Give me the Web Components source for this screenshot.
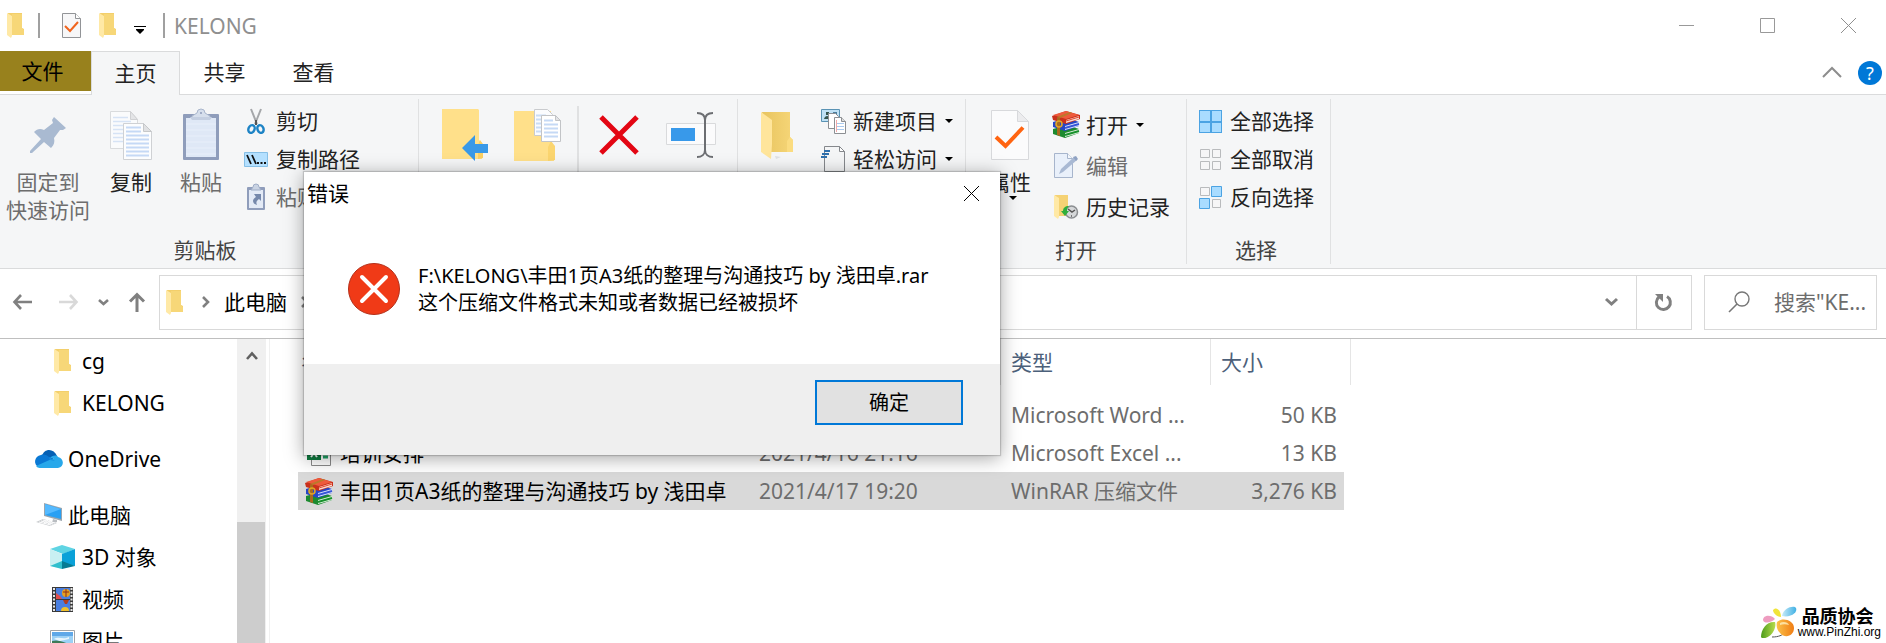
<!DOCTYPE html>
<html lang="zh-CN">
<head>
<meta charset="utf-8">
<title>KELONG</title>
<style>
  html, body { height: 100%; }
  body {
    margin: 0;
    overflow: hidden;
    background: #fff;
    color: #000;
    font: 21px/28px "Noto Sans", "Noto Sans CJK SC", sans-serif;
  }
</style>
</head>
<body>
<explorer-window></explorer-window>

<script>
const ICONS = {
  folder: ['0 0 17 25', `
    <path d="M1 0h14v15l2 1v6H4z" fill="#f3cf6b"/>
    <path d="M5 1h10v14l2 2v5H5z" fill="#f7d778"/>
    <path d="M0 0l5 3v20l-1 2-4-3z" fill="#ffe9a6"/>`],
  folderBig: ['0 0 33 49', `
    <defs><linearGradient id="g"><stop offset="0" stop-color="#e8c45f"/><stop offset="1" stop-color="#f6d678"/></linearGradient></defs>
    <path d="M14 45l6 1-5 2z" fill="#dfe1e4"/>
    <path d="M1 1h28v25l3 3v12H10z" fill="url(#g)"/>
    <path d="M26 41V30l3-4 3 3v12z" fill="#fbdc80"/>
    <path d="M0 1l11 8v24l-1 15-10-7z" fill="#ffe59b"/>`],
  checkDoc: ['0 0 38 50', `
    <path d="M.5.5h26l11 11v38H.5z" fill="#fbfbfc" stroke="#d8d9dc"/>
    <path d="M26.5.5v11h11z" fill="#ececee" stroke="#d8d9dc"/>
    <path d="M5 27l9.500 9L32 17.500" fill="none" stroke="#ff6411" stroke-width="4"/>`],
  checkSmall: ['0 0 19 25', `
    <path d="M.5.5h13l5 5v19H.5z" fill="#f7f7f8" stroke="#929497"/>
    <path d="M13.5.5v5h5" fill="#fff" stroke="#929497"/>
    <path d="M3 13l5 5 8-9" fill="none" stroke="#f0641e" stroke-width="2"/>`],
  customize: ['0 0 12 8', `<path d="M0 0h12v1H0zM2 3h8v1L6 8 2 4z"/>`],
  caret: ['0 0 8 4', `<path d="M0 0h8L4 4z"/>`],
  pin: ['0 0 36 36', `
    <path d="M24 0l12 11-3 2-3 0-6 8c1 4 0 7-3 10l-7-6L2 36l-2 0 0-2 11-12-7-7c3-3 6-4 10-2l9-7-1-3z" fill="#a9bad1"/>`],
  copy: ['0 0 42 49', `
    <path d="M.5.5h20l7 8v29H.5z" fill="#fafbfc" stroke="#d9dbdd"/>
    <path d="M20.5.5v8h7z" fill="#e4e5e7" stroke="#d0d1d3"/>
    <path d="M3 6.5h15M3 10.5h18M3 14.5h18M3 18.5h10M3 22.5h10M3 26.5h10M3 30.5h10" stroke="#d6e3f5" stroke-width="1.5"/>
    <path d="M13.5 12.5h20l8 8v28h-28z" fill="#fcfdfe" stroke="#cfd1d4"/>
    <path d="M33.5 12.5v8h8z" fill="#e0e1e3" stroke="#c6c8ca"/>
    <path d="M16 16.5h15M16 20.5h15M16 24.5h23M16 28.5h23M16 32.5h23M16 36.5h23M16 40.5h23M16 44.5h23" stroke="#c5d9f5" stroke-width="2"/>`],
  paste: ['0 0 36 50', `
    <rect y="4" width="36" height="46" rx="1" fill="#8f9dbb"/>
    <path d="M3 8h30v39H3z" fill="#dfe8f6"/>
    <path d="M3 14h30M3 20h30M3 26h30M3 32h30M3 38h30M3 44h30" stroke="#e8effa"/>
    <path d="M9 9V6l5-3a4 4 0 0 1 8 0l5 3v3z" fill="#d6dfec" stroke="#a9b6cc"/>
    <path d="M7 7h22l-2 3H9z" fill="#c4cfe1"/><circle cx="18" cy="3" r="1" fill="#8f9dbb"/>`],
  cut: ['0 0 18 25', `
    <path d="M4 0l6 15M14 0L8 15" stroke="#a5a7aa" stroke-width="2" fill="none"/>
    <path d="M9 11v5" stroke="#555" stroke-width="2"/>
    <ellipse cx="4.5" cy="20" rx="3" ry="4" transform="rotate(24 4.5 20)" fill="none" stroke="#1d83c5" stroke-width="2.4"/>
    <ellipse cx="13.5" cy="20" rx="3" ry="4" transform="rotate(-24 13.5 20)" fill="none" stroke="#1d83c5" stroke-width="2.4"/>`],
  path: ['0 0 24 15', `
    <path d="M.5.5h23v14H.5z" fill="#b4e0ff" stroke="#86bfe6"/>
    <path d="M3 3l4 9M8 3l4 9" stroke="#111" stroke-width="1.8"/>
    <path d="M13 10h2v2h-2zM16.5 10h2v2h-2zM20 10h2v2h-2z" fill="#111"/>`],
  shortcut: ['0 0 18 25', `
    <rect y="2" width="18" height="23" rx="1" fill="#8f9dbb"/>
    <path d="M2 5h14v18H2z" fill="#e3eaf6"/>
    <path d="M4 5l2-3a3 3 0 0 1 6 0l2 3z" fill="#c9d3e3" stroke="#9fadc6"/>
    <path d="M7 9h7v7l-2-2c-3 2-3 4-2 6-4-1-6-5-1-8z" fill="#7588ab"/>`],
  moveTo: ['0 0 47 52', `
    <path d="M0 0h36l1 1v30l3 3v16H0z" fill="#ffe08a"/>
    <path d="M36 50V36l2-5 3 4v14z" fill="#fbd063"/>
    <path d="M20 39l13-13v9h13v9H33v8z" fill="#3999e8"/>`],
  copyTo: ['0 0 47 52', `
    <path d="M0 2h37v32l3 3v15H0z" fill="#ffe08a"/>
    <path d="M34 52V38l3-6 4 5v14z" fill="#fbd56f"/>
    <path d="M20.5.5h13l5 5v21h-18z" fill="#fbfcfe" stroke="#c9cbce"/>
    <path d="M22 6.5h10M22 10.5h5M22 14.5h5M22 18.5h5M22 22.5h5" stroke="#c9dcf5" stroke-width="2"/>
    <path d="M27.5 6.5h14l5 5v21h-19z" fill="#fff" stroke="#c2c4c7"/>
    <path d="M41.5 6.5v5h5z" fill="#e3e4e6" stroke="#c2c4c7"/>
    <path d="M30 11.5h9M30 15.5h14M30 19.5h14M30 23.5h14M30 27.5h14" stroke="#c5d9f5" stroke-width="2"/>`],
  remove: ['0 0 40 40', `<path d="M2 2l36 36M38 2L2 38" stroke="#e30613" stroke-width="5"/>`],
  rename: ['0 0 50 46', `
    <path d="M.5 11.5h49v21H.5z" fill="#fbfbfc" stroke="#d9dadc"/>
    <path d="M5 16h24v13H5z" fill="#3899ea"/>
    <path d="M31 1c5 0 8 2 8 7v30c0 4-3 7-8 7M47 1c-5 0-8 2-8 7v30c0 4 3 7 8 7" fill="none" stroke="#6c6e72" stroke-width="2"/>`],
  newItem: ['0 0 25 25', `
    <path d="M.5.5h18v12H.5z" fill="#bfe1f5" stroke="#5a93b4"/>
    <path d="M3 10c1-4 5-4 7 0zM5 3h3v3H5z" fill="#35554f"/><path d="M12 4h4" stroke="#4c7f9e" stroke-width="2"/>
    <path d="M7.5 4.5h7l3 3v12h-10z" fill="#fff" stroke="#8c8f93"/>
    <path d="M13.5 8.5h7l4 4v12h-11z" fill="#fff" stroke="#8c8f93"/>
    <path d="M20.5 8.5v4h4" fill="#ddd" stroke="#8c8f93"/>
    <path d="M16 14.5h7M16 17.5h7M16 20.5h7" stroke="#a9c9ee"/><path d="M15.5 11v12" stroke="#f0a9a9"/>`],
  easyAccess: ['0 0 24 26', `
    <path d="M3.5.5h15l5 5v20h-20z" fill="#f4f5f6" stroke="#85888c"/>
    <path d="M18.5.5v5h5z" fill="#fff" stroke="#85888c"/>
    <path d="M3 5h6M1 8h7M0 11h6" stroke="#2f70ad" stroke-width="2"/>`],
  winrar: ['0 0 28 27', `
    <path d="M1 18l14-4 12 4v4l-14 5-12-4z" fill="#1c8a2f"/>
    <path d="M13 22l14-4v4l-14 4z" fill="#dff2df"/><path d="M13 24l14-4" stroke="#17912c" stroke-width="2"/>
    <path d="M1 11l14-4 12 4v4l-14 5-12-4z" fill="#2546c6"/>
    <path d="M13 15l14-4v4l-14 4z" fill="#e3e8fb"/><path d="M13 17l14-4" stroke="#3656d8" stroke-width="2"/>
    <path d="M0 5l14-5 14 4v4l-14 5L1 9z" fill="#c9301c"/>
    <path d="M1 4l13-4 13 4-13 4z" fill="#ee5a3c"/>
    <path d="M14 9l13-4v3l-13 4z" fill="#f8d8d0"/><path d="M14 10l13-4" stroke="#e24a2c"/>
    <path d="M5 6l3 1v18l-3-1z" fill="#a8691f"/>
    <path d="M5 6L18 1l2 1L8 7z" fill="#b97a2b"/>
    <circle cx="7" cy="13" r="3" fill="none" stroke="#e2a524" stroke-width="1.6"/>`],
  edit: ['0 0 24 25', `
    <path d="M.5.5h13l5 5v19H.5z" fill="#e9f0fa" stroke="#a7b5cc"/>
    <path d="M13.5.5v5h5" fill="#f4f7fb" stroke="#a7b5cc"/>
    <path d="M5 21l2-5L20 4l3 3L9 19z" fill="#a9b9d3"/><path d="M19 4l3-1 2 3-2 2z" fill="#8fa2c2"/>`],
  history: ['0 0 24 24', `
    <path d="M1 0h13v12l2 2v7H4z" fill="#f5d274"/>
    <path d="M0 0l5 3v19l-1 2-4-3z" fill="#ffe9a6"/>
    <circle cx="17.5" cy="17" r="6" fill="#d5d7d9" stroke="#8b8e91" stroke-width="1.5"/>
    <path d="M14 14l4 3 3-2M17 21h1" fill="none" stroke="#555" stroke-width="1.5"/>
    <path d="M15 11c-4 0-6 2-6 5H7l4 5 4-5h-2c0-2 0-3 2-5z" fill="#2fae3c"/>`],
  selectAll: ['0 0 23 23', `
    <path d="M0 0h23v23H0z" fill="#4ba3e3"/>
    <path d="M1 1h10v10H1zM13 1h9v10h-9zM1 13h10v9H1zM13 13h9v9h-9z" fill="#a9dcff"/>`],
  selectNone: ['0 0 23 23', `
    <path d="M1.5 1.5h9v8h-9zM13.5 1.5h8v8h-8zM1.5 13.5h9v8h-9zM13.5 13.5h8v8h-8z" fill="#f6f6f7" stroke="#b9bbbd"/>`],
  selectInvert: ['0 0 23 23', `
    <path d="M1.5 1.5h9v8h-9zM13.5 13.5h8v8h-8z" fill="#f6f6f7" stroke="#b9bbbd"/>
    <path d="M12.5.5h10v10h-10zM.5 12.5h10v10H.5z" fill="#a9dcff" stroke="#4ba3e3"/>`],
  minimize: ['0 0 15 15', `<path d="M0 7.5h15" stroke="#999"/>`],
  maximize: ['0 0 15 15', `<path d="M.5.5h14v14H.5z" fill="none" stroke="#999"/>`],
  close: ['0 0 15 15', `<path d="M0 0l15 15M15 0L0 15" stroke="currentColor" fill="none"/>`],
  collapse: ['0 0 20 11', `<path d="M1 10l9-9 9 9" fill="none" stroke="#8d8d8d" stroke-width="2"/>`],
  back: ['0 0 19 16', `<path d="M19 8H2M8 1L1.500 8 8 15" fill="none" stroke="currentColor" stroke-width="2.6"/>`],
  forward: ['0 0 19 16', `<path d="M0 8h17M11 1l6.5 7-6.5 7" fill="none" stroke="currentColor" stroke-width="2.6"/>`],
  up: ['0 0 16 19', `<path d="M8 19V2M1 8.5L8 1.5l7 7" fill="none" stroke="currentColor" stroke-width="3"/>`],
  chevron: ['0 0 13 8', `<path d="M1 1l5.5 5L12 1" fill="none" stroke="currentColor" stroke-width="3"/>`],
  chevronSmall: ['0 0 9 6', `<path d="M0 1l4.5 4L9 1" fill="none" stroke="currentColor" stroke-width="2.6"/>`],
  crumb: ['0 0 8 12', `<path d="M1 1l5 5-5 5" fill="none" stroke="#808080" stroke-width="2.6"/>`],
  refresh: ['0 0 18 18', `
    <path d="M12 3.5A7 7 0 1 1 4 4" fill="none" stroke="#808080" stroke-width="3"/>
    <path d="M0 1h8v8z" fill="#808080"/>`],
  search: ['0 0 22 22', `
    <circle cx="14" cy="8" r="7" fill="none" stroke="#777" stroke-width="1.4"/>
    <path d="M9 13l-8 8" stroke="#777" stroke-width="1.6"/>`],
  scrollUp: ['0 0 12 10', `<path d="M1 8l5-5.5L11 8" fill="none" stroke="#606060" stroke-width="2.6"/>`],
  onedrive: ['0 0 28 18', `
    <path d="M7 6c2-8 12-8 15 0l-9 6z" fill="#0560b4"/>
    <path d="M4 17C-2 15-1 6 6 5c3-1 6 0 8 2l9 5-18 6z" fill="#0a78d4"/>
    <path d="M15 8c3-3 7-3 8-1 6 1 7 10 0 11H5c-2 0-3-1-4-2l18-8z" fill="#28a8ea"/>
    <path d="M14 7l6 4-5-1z" fill="#1490df"/>`],
  computer: ['0 0 27 24', `
    <path d="M8 0l18 5v13L8 13z" fill="#9aa5ae"/>
    <path d="M9 1l16 5v10L9 12z" fill="#29a0f3"/><path d="M9 1l16 5L9 12z" fill="#55baff"/>
    <path d="M17 16l4 1v2l-5 1z" fill="#b9bdc1"/>
    <path d="M0 19l7-3 14 4-7 3z" fill="#c9cccf"/>
    <path d="M3 19l12 3M5 18l12 3M7 17l12 3M8 20l4-3M12 21l4-3" stroke="#fff"/>`],
  cube: ['0 0 25 24', `
    <path d="M0 4l12-4 13 4-12 5z" fill="#5fd4e3"/>
    <path d="M0 4l12 5v10L0 21z" fill="#c9f0f2"/>
    <path d="M25 4L12 9v10l13 2z" fill="#0aa1d8"/>
    <path d="M0 21l12-5v8z" fill="#32bfcd"/><path d="M25 21l-13-5v8z" fill="#067b93"/>`],
  video: ['0 0 21 25', `
    <path d="M0 0h21v25H0z" fill="#3a3a3a"/>
    <path d="M2 1v24M19.5 1v24" stroke="#e6e6e6" stroke-width="2" stroke-dasharray="2 1.5"/>
    <path d="M4 1h14v11H4zM4 13h14v11H4z" fill="#4a7fe0"/>
    <path d="M4 6l4 3 2 3H4z" fill="#e04e4e"/>
    <circle cx="14" cy="6" r="4" fill="#e8a01e"/><path d="M14 2v8M11 5h6" stroke="#8e2f1a"/>
    <path d="M11 13h6l-2 4h-2z" fill="#b33d1f"/><path d="M9 24a4 4 0 0 1 8 0z" fill="#f0c02b"/>`],
  picture: ['0 0 25 22', `
    <path d="M.5.5h24v21H.5z" fill="#fff" stroke="#a0a3a6"/>
    <path d="M2 2h21v18H2z" fill="#9bd0f5"/><path d="M2 2h21v4H2z" fill="#5fa8e8"/>
    <path d="M2 11c7-2 12 2 21 4v5H2z" fill="#3e7a58"/><path d="M4 9c5-3 9 1 15-2v2l-9 2z" fill="#e9f5fc"/>`],
  excel: ['0 0 24 26', `
    <path d="M4.5.5h14l5 5v20h-19z" fill="#fff" stroke="#8a8a8a"/>
    <path d="M0 6h14v14H0z" fill="#107c41"/>
    <path d="M4 9l6 8M10 9l-6 8" stroke="#fff" stroke-width="2"/>
    <path d="M16 9h5M16 13h5M16 17h5" stroke="#21a366" stroke-width="3"/>`],
  word: ['0 0 24 26', `
    <path d="M4.5.5h14l5 5v20h-19z" fill="#fff" stroke="#8a8a8a"/>
    <path d="M0 6h14v14H0z" fill="#185abd"/>
    <path d="M3 9l2 8 2-6 2 6 2-8" fill="none" stroke="#fff" stroke-width="2"/>`],
  error: ['0 0 52 52', `
    <circle cx="26" cy="26" r="25.5" fill="#f03a17" stroke="#b5301a"/>
    <path d="M14 14l24 24M38 14L14 38" stroke="#fff" stroke-width="4" stroke-linecap="round"/>`],
  petals: ['0 0 36 33', `
    <defs>
      <linearGradient id="o"><stop offset="0" stop-color="#fbc24a"/><stop offset="1" stop-color="#f07d14"/></linearGradient>
      <linearGradient id="gr" x1="1" x2="0"><stop offset="0" stop-color="#b8dc4c"/><stop offset="1" stop-color="#4d9c1c"/></linearGradient>
      <linearGradient id="b" x1="0" x2="1"><stop offset="0" stop-color="#c9ebf8"/><stop offset="1" stop-color="#3fb0e4"/></linearGradient>
    </defs>
    <path d="M11 31c7 0 10-2 13-4" stroke="#555" fill="none"/>
    <path d="M0 31C0 23 6 15 14 16c2 6-4 16-11 16-1 0-3 0-3-1z" fill="url(#gr)"/>
    <path d="M2 14c0-5 8-6 12-1-4 4-11 5-12 1z" fill="#ee9cc0"/>
    <path d="M12 4c3-4 8 0 8 7-4 0-8-4-8-7z" fill="#f0e43a"/>
    <path d="M21 10c1-8 12-11 14-8 2 4-5 10-14 8z" fill="url(#b)"/>
    <path d="M16 16c5-5 17-2 17 6s-9 11-14 5c-3-3-4-7-3-11z" fill="url(#o)"/>
    <path d="M19 17c3-2 8-1 9 2-3-1-6-1-9 0z" fill="#fde0a0"/>`]
};

class UiIcon extends HTMLElement {
  constructor() {
    super();
    this.attachShadow({ mode: 'open' });
  }

  connectedCallback() {
    const [box, body] = ICONS[this.getAttribute('name')];
    const [, , w, h] = box.split(' ');
    this.shadowRoot.innerHTML = `
      <style>
        :host { display: inline-block; flex: none; width: ${w}px; height: ${h}px; }
        svg { display: block; overflow: visible; }
      </style>
      <svg width="${w}" height="${h}" viewBox="${box}" aria-hidden="true">${body}</svg>
    `;
  }
}

// Shared by every component that holds buttons.
const BUTTON_RESET = `
  button {
    display: flex;
    align-items: center;
    justify-content: center;
    margin: 0;
    padding: 0;
    border: 0;
    background: none;
    font: inherit;
    color: inherit;
  }
`;

class TitleBar extends HTMLElement {
  constructor() {
    super();
    this.attachShadow({ mode: 'open' }).innerHTML = `
      <style>
        ${BUTTON_RESET}
        :host { display: flex; align-items: center; height: 51px; padding-left: 7px; color: #8f8f8f; }
        .bar { width: 2px; height: 25px; background: #a0a0a0; }
        .quick { display: flex; align-items: center; gap: 18px; padding: 0 17px 0 22px; }
        .quick button:last-child { color: #000; height: 16px; align-items: flex-end; }
        .home { margin-right: 14px; }
        .title { flex: 1; margin: 0 0 0 9px; font-size: 21px; font-weight: 400; }
        .controls { display: flex; gap: 6px; }
        .controls button { width: 75px; height: 51px; }
      </style>
      <ui-icon class="home" name="folder"></ui-icon>
      <span class="bar"></span>
      <div class="quick">
        <button aria-label="属性"><ui-icon name="checkSmall"></ui-icon></button>
        <button aria-label="新建文件夹"><ui-icon name="folder"></ui-icon></button>
        <button aria-label="自定义"><ui-icon name="customize"></ui-icon></button>
      </div>
      <span class="bar"></span>
      <h1 class="title"><slot></slot></h1>
      <div class="controls">
        <button aria-label="最小化"><ui-icon name="minimize"></ui-icon></button>
        <button aria-label="最大化"><ui-icon name="maximize"></ui-icon></button>
        <button aria-label="关闭"><ui-icon name="close"></ui-icon></button>
      </div>
    `;
  }
}

class RibbonTabs extends HTMLElement {
  constructor() {
    super();
    this.attachShadow({ mode: 'open' }).innerHTML = `
      <style>
        ${BUTTON_RESET}
        :host { display: flex; align-items: flex-start; height: 43px; border-bottom: 1px solid #dadbdc; color: #222; }
        button { box-sizing: border-box; height: 43px; width: 89px; padding-bottom: 2px; }
        .file { width: 91px; height: 40px; padding: 0 6px 0 0; background: #98811d; color: #000; }
        .active { height: 44px; border: 1px solid #dadbdc; border-bottom: 0; background: #f5f6f7; }
        .side { display: flex; align-items: center; gap: 16px; height: 43px; margin-left: auto; padding-right: 4px; }
        .side button { width: auto; height: auto; padding: 0; }
        .side .help { width: 24px; height: 24px; border-radius: 50%; background: #0078d7; color: #fff; font-size: 18px; }
      </style>
      <button class="file">文件</button>
      <button class="active">主页</button>
      <button>共享</button>
      <button>查看</button>
      <div class="side">
        <button aria-label="折叠功能区"><ui-icon name="collapse"></ui-icon></button>
        <button class="help">?</button>
      </div>
    `;
  }
}

class RibbonGroup extends HTMLElement {
  constructor() {
    super();
    this.attachShadow({ mode: 'open' }).innerHTML = `
      <style>
        :host {
          display: flex;
          flex-direction: column;
          margin: 4px 0;
          padding-right: 16px;
          border-right: 1px solid #e0e1e2;
        }
        .items { display: flex; flex: 1; }
        .label { height: 28px; margin-right: -8px; color: #444; text-align: center; }
      </style>
      <div class="items"><slot></slot></div>
      <div class="label">${this.getAttribute('label') || ''}</div>
    `;
  }
}

class BigButton extends HTMLElement {
  constructor() {
    super();
    this.attachShadow({ mode: 'open' }).innerHTML = `
      <style>
        ${BUTTON_RESET}
        :host { display: block; min-width: var(--tile, 72px); }
        button { flex-direction: column; justify-content: flex-start; width: 100%; padding: 10px 6px 0; color: #222; }
        .art { display: flex; align-items: center; justify-content: center; height: 52px; margin-bottom: 7px; }
        :host([disabled]) button { color: #6d6d6d; }
        ui-icon[name=caret] { margin-left: 6px; }
      </style>
      <button ${this.hasAttribute('disabled') ? 'disabled' : ''} aria-label="${this.getAttribute('label') || this.textContent}">
        <span class="art"><ui-icon name="${this.getAttribute('icon')}"></ui-icon></span>
        <slot></slot>
        ${this.hasAttribute('menu') ? '<ui-icon name="caret"></ui-icon>' : ''}
      </button>
    `;
  }
}

class SmallButton extends HTMLElement {
  constructor() {
    super();
    this.attachShadow({ mode: 'open' }).innerHTML = `
      <style>
        ${BUTTON_RESET}
        :host { display: block; }
        button { gap: 8px; height: var(--row, 38px); color: #222; white-space: nowrap; }
        .art { display: flex; justify-content: center; width: 24px; }
        :host([disabled]) button { color: #6d6d6d; }
      </style>
      <button ${this.hasAttribute('disabled') ? 'disabled' : ''}>
        <span class="art"><ui-icon name="${this.getAttribute('icon')}"></ui-icon></span>
        <slot></slot>
        ${this.hasAttribute('menu') ? '<ui-icon name="caret"></ui-icon>' : ''}
      </button>
    `;
  }
}

class RibbonBar extends HTMLElement {
  constructor() {
    super();
    this.attachShadow({ mode: 'open' }).innerHTML = `
      <style>
        :host { display: flex; height: 173px; background: #f5f6f7; border-bottom: 1px solid #dadbdc; }
        .clipboard { --tile: 70px; }
        .pin { min-width: 96px; }
        .list { padding: 3px 0 0 8px; }
        .open { --row: 41px; padding-top: 5px; }
        .divider { width: 2px; margin: 7px 4px 0; background: #e0e1e2; }
        .organize { padding: 0 10px; }
        .new { padding: 0 12px 0 3px; }
        .props { padding-left: 8px; }
        .select { padding-left: 3px; }
      </style>
      <ribbon-group class="clipboard" label="剪贴板">
        <big-button class="pin" icon="pin" disabled>固定到<br>快速访问</big-button>
        <big-button icon="copy">复制</big-button>
        <big-button icon="paste" disabled>粘贴</big-button>
        <div class="list">
          <small-button icon="cut">剪切</small-button>
          <small-button icon="path">复制路径</small-button>
          <small-button icon="shortcut" disabled>粘贴快捷方式</small-button>
        </div>
      </ribbon-group>
      <ribbon-group class="organize">
        <big-button icon="moveTo" label="移动到"></big-button>
        <big-button icon="copyTo" label="复制到"></big-button>
        <span class="divider"></span>
        <big-button icon="remove" label="删除"></big-button>
        <big-button icon="rename" label="重命名"></big-button>
      </ribbon-group>
      <ribbon-group class="new">
        <big-button icon="folderBig" label="新建文件夹"></big-button>
        <div class="list">
          <small-button icon="newItem" menu>新建项目</small-button>
          <small-button icon="easyAccess" menu>轻松访问</small-button>
        </div>
      </ribbon-group>
      <ribbon-group class="props" label="打开">
        <big-button icon="checkDoc" menu>属性</big-button>
        <div class="list open">
          <small-button icon="winrar" menu>打开</small-button>
          <small-button icon="edit" disabled>编辑</small-button>
          <small-button icon="history">历史记录</small-button>
        </div>
      </ribbon-group>
      <ribbon-group class="select" label="选择">
        <div class="list">
          <small-button icon="selectAll">全部选择</small-button>
          <small-button icon="selectNone">全部取消</small-button>
          <small-button icon="selectInvert">反向选择</small-button>
        </div>
      </ribbon-group>
    `;
  }
}

class AddressBar extends HTMLElement {
  constructor() {
    super();
    this.attachShadow({ mode: 'open' }).innerHTML = `
      <style>
        ${BUTTON_RESET}
        :host { display: flex; align-items: center; box-sizing: border-box; height: 70px; padding: 0 9px 3px 13px; border-bottom: 1px solid #bfbfbf; color: #808080; }
        .history { display: flex; align-items: center; gap: 21px; margin-right: 14px; }
        .history button:nth-child(1) { margin-right: 6px; }
        .history button:nth-child(2) { color: #d9d9d9; }
        .path, .search { display: flex; align-items: center; box-sizing: border-box; height: 55px; border: 1px solid #d9d9d9; }
        .path { flex: 1; padding-left: 6px; }
        .crumbs { display: flex; align-items: center; gap: 14px; flex: 1; color: #000; }
        .crumbs ui-icon[name=folder] { margin-right: 5px; }
        .drop { width: 50px; height: 53px; }
        .refresh { width: 55px; height: 53px; border-left: 1px solid #d9d9d9; }
        .search { width: 173px; margin-left: 12px; padding: 0 10px 0 23px; gap: 24px; }
        input { flex: 1; min-width: 0; padding: 0; border: 0; outline: 0; font: inherit; background: none; }
        input::placeholder { color: #6d6d6d; opacity: 1; }
      </style>
      <div class="history">
        <button aria-label="返回"><ui-icon name="back"></ui-icon></button>
        <button aria-label="前进" disabled><ui-icon name="forward"></ui-icon></button>
        <button aria-label="最近浏览"><ui-icon name="chevronSmall"></ui-icon></button>
        <button aria-label="上移"><ui-icon name="up"></ui-icon></button>
      </div>
      <div class="path">
        <div class="crumbs">
          <ui-icon name="folder"></ui-icon>
          <ui-icon name="crumb"></ui-icon>
          <button>此电脑</button>
          <ui-icon name="crumb"></ui-icon>
        </div>
        <button class="drop" aria-label="以前的位置"><ui-icon name="chevron"></ui-icon></button>
        <button class="refresh" aria-label="刷新"><ui-icon name="refresh"></ui-icon></button>
      </div>
      <label class="search">
        <ui-icon name="search"></ui-icon>
        <input type="text" placeholder='搜索"KE...' aria-label="搜索">
      </label>
    `;
  }
}

class NavItem extends HTMLElement {
  constructor() {
    super();
    this.attachShadow({ mode: 'open' }).innerHTML = `
      <style>
        :host { display: block; }
        a { display: flex; align-items: center; height: 42px; padding-left: 35px; gap: 5px; color: #000; text-decoration: none; white-space: nowrap; }
        .art { display: flex; justify-content: center; width: 28px; }
        :host([child]) a { padding-left: 48px; gap: 6px; }
        :host([root]) { margin-top: 14px; }
      </style>
      <a href="#"><span class="art"><ui-icon name="${this.getAttribute('icon')}"></ui-icon></span><slot></slot></a>
    `;
  }
}

class NavPane extends HTMLElement {
  constructor() {
    super();
    this.attachShadow({ mode: 'open' }).innerHTML = `
      <style>
        ${BUTTON_RESET}
        :host { display: flex; overflow: hidden; border-right: 1px solid #f0f0f0; padding-right: 3px; }
        nav { width: 237px; padding-top: 1px; }
        .scroll { display: flex; flex-direction: column; width: 29px; background: #f0f0f0; }
        .scroll button { height: 34px; }
        .thumb { flex: 1; margin: 149px 1px 0 0; background: #cdcdcd; }
      </style>
      <nav>
        <nav-item child icon="folder">cg</nav-item>
        <nav-item child icon="folder">KELONG</nav-item>
        <nav-item root icon="onedrive">OneDrive</nav-item>
        <nav-item root icon="computer">此电脑</nav-item>
        <nav-item child icon="cube">3D 对象</nav-item>
        <nav-item child icon="video">视频</nav-item>
        <nav-item child icon="picture">图片</nav-item>
      </nav>
      <div class="scroll">
        <button aria-label="向上滚动"><ui-icon name="scrollUp"></ui-icon></button>
        <div class="thumb"></div>
      </div>
    `;
  }
}

class FileList extends HTMLElement {
  constructor() {
    super();
    this.attachShadow({ mode: 'open' }).innerHTML = `
      <style>
        :host { display: block; overflow: hidden; padding-left: 28px; }
        table { table-layout: fixed; width: 1053px; border-collapse: separate; border-spacing: 0; color: #6d6d6d; }
        th { height: 46px; padding: 0 10px; border-right: 1px solid #e5e5e5; color: #4c607a; font-weight: 400; text-align: left; box-sizing: border-box; }
        th:first-child { padding-left: 3px; }
        tbody::before { content: ""; display: block; height: 11px; }
        td { height: 38px; padding: 0 10px; white-space: nowrap; box-sizing: border-box; }
        td:first-child { padding-left: 7px; color: #000; }
        td:last-of-type { padding-right: 7px; text-align: right; }
        .name { display: flex; align-items: center; gap: 7px; }
        .art { display: flex; justify-content: center; width: 28px; }
        .selected td { background: #d9d9d9; }
      </style>
      <table>
        <colgroup><col style="width:451px"><col style="width:252px"><col style="width:210px"><col style="width:133px"><col></colgroup>
        <thead>
          <tr><th>名称</th><th></th><th>类型</th><th colspan="2">大小</th></tr>
        </thead>
        <tbody>
          <tr>
            <td><div class="name"><span class="art"><ui-icon name="word"></ui-icon></span></div></td>
            <td></td><td>Microsoft Word ...</td><td>50 KB</td>
          </tr>
          <tr>
            <td><div class="name"><span class="art"><ui-icon name="excel"></ui-icon></span>培训安排</div></td>
            <td>2021/4/16 21:16</td><td>Microsoft Excel ...</td><td>13 KB</td>
          </tr>
          <tr class="selected">
            <td><div class="name"><span class="art"><ui-icon name="winrar"></ui-icon></span>丰田1页A3纸的整理与沟通技巧 by 浅田卓</div></td>
            <td>2021/4/17 19:20</td><td>WinRAR 压缩文件</td><td>3,276 KB</td>
          </tr>
        </tbody>
      </table>
    `;
  }
}

class MessageDialog extends HTMLElement {
  constructor() {
    super();
    this.attachShadow({ mode: 'open' }).innerHTML = `
      <style>
        ${BUTTON_RESET}
        :host { display: block; background: #fff; box-shadow: 0 0 1px 1px rgba(0,0,0,.16), 0 3px 18px rgba(0,0,0,.36); }
        header { display: flex; align-items: center; justify-content: space-between; height: 42px; padding-left: 3px; }
        header button { width: 58px; height: 42px; }
        .body { display: flex; align-items: center; gap: 18px; padding: 48px 44px; font-size: 20px; line-height: 27px; }
        .body p { margin: 0; }
        footer { display: flex; justify-content: flex-end; padding: 16px 37px 30px; background: #efefef; }
        footer button { box-sizing: border-box; width: 148px; height: 45px; border: 2px solid #0078d7; background: #e1e1e1; font-size: 20px; }
      </style>
      <div role="alertdialog">
        <header>${this.getAttribute('heading')}<button aria-label="关闭"><ui-icon name="close"></ui-icon></button></header>
        <div class="body"><ui-icon name="error"></ui-icon><p><slot></slot></p></div>
        <footer><button>确定</button></footer>
      </div>
    `;
  }
}

class SiteMark extends HTMLElement {
  constructor() {
    super();
    this.attachShadow({ mode: 'open' }).innerHTML = `
      <style>
        :host { display: flex; align-items: flex-end; gap: 1px; }
        b { display: block; padding-left: 4px; font-size: 18px; line-height: 18px; }
        span { display: block; font: 12px/14px "Liberation Sans", sans-serif; }
      </style>
      <ui-icon name="petals"></ui-icon>
      <div><b>品质协会</b><span>www.PinZhi.org</span></div>
    `;
  }
}

class ExplorerWindow extends HTMLElement {
  constructor() {
    super();
    this.attachShadow({ mode: 'open' }).innerHTML = `
      <style>
        :host { display: flex; flex-direction: column; position: relative; height: 100vh; overflow: hidden; }
        main { display: flex; flex: 1; min-height: 0; }
        file-list { flex: 1; }
        message-dialog { position: absolute; left: 304px; top: 172px; width: 696px; }
        site-mark { position: absolute; right: 5px; bottom: 4px; }
      </style>
      <title-bar>KELONG</title-bar>
      <ribbon-tabs></ribbon-tabs>
      <ribbon-bar></ribbon-bar>
      <address-bar></address-bar>
      <main>
        <nav-pane></nav-pane>
        <file-list></file-list>
      </main>
      <message-dialog heading="错误">F:\\KELONG\\丰田1页A3纸的整理与沟通技巧 by 浅田卓.rar<br>这个压缩文件格式未知或者数据已经被损坏</message-dialog>
      <site-mark></site-mark>
    `;
  }
}

customElements.define('ui-icon', UiIcon);
customElements.define('title-bar', TitleBar);
customElements.define('ribbon-tabs', RibbonTabs);
customElements.define('ribbon-group', RibbonGroup);
customElements.define('big-button', BigButton);
customElements.define('small-button', SmallButton);
customElements.define('ribbon-bar', RibbonBar);
customElements.define('address-bar', AddressBar);
customElements.define('nav-item', NavItem);
customElements.define('nav-pane', NavPane);
customElements.define('file-list', FileList);
customElements.define('message-dialog', MessageDialog);
customElements.define('site-mark', SiteMark);
customElements.define('explorer-window', ExplorerWindow);
</script>
</body>
</html>
